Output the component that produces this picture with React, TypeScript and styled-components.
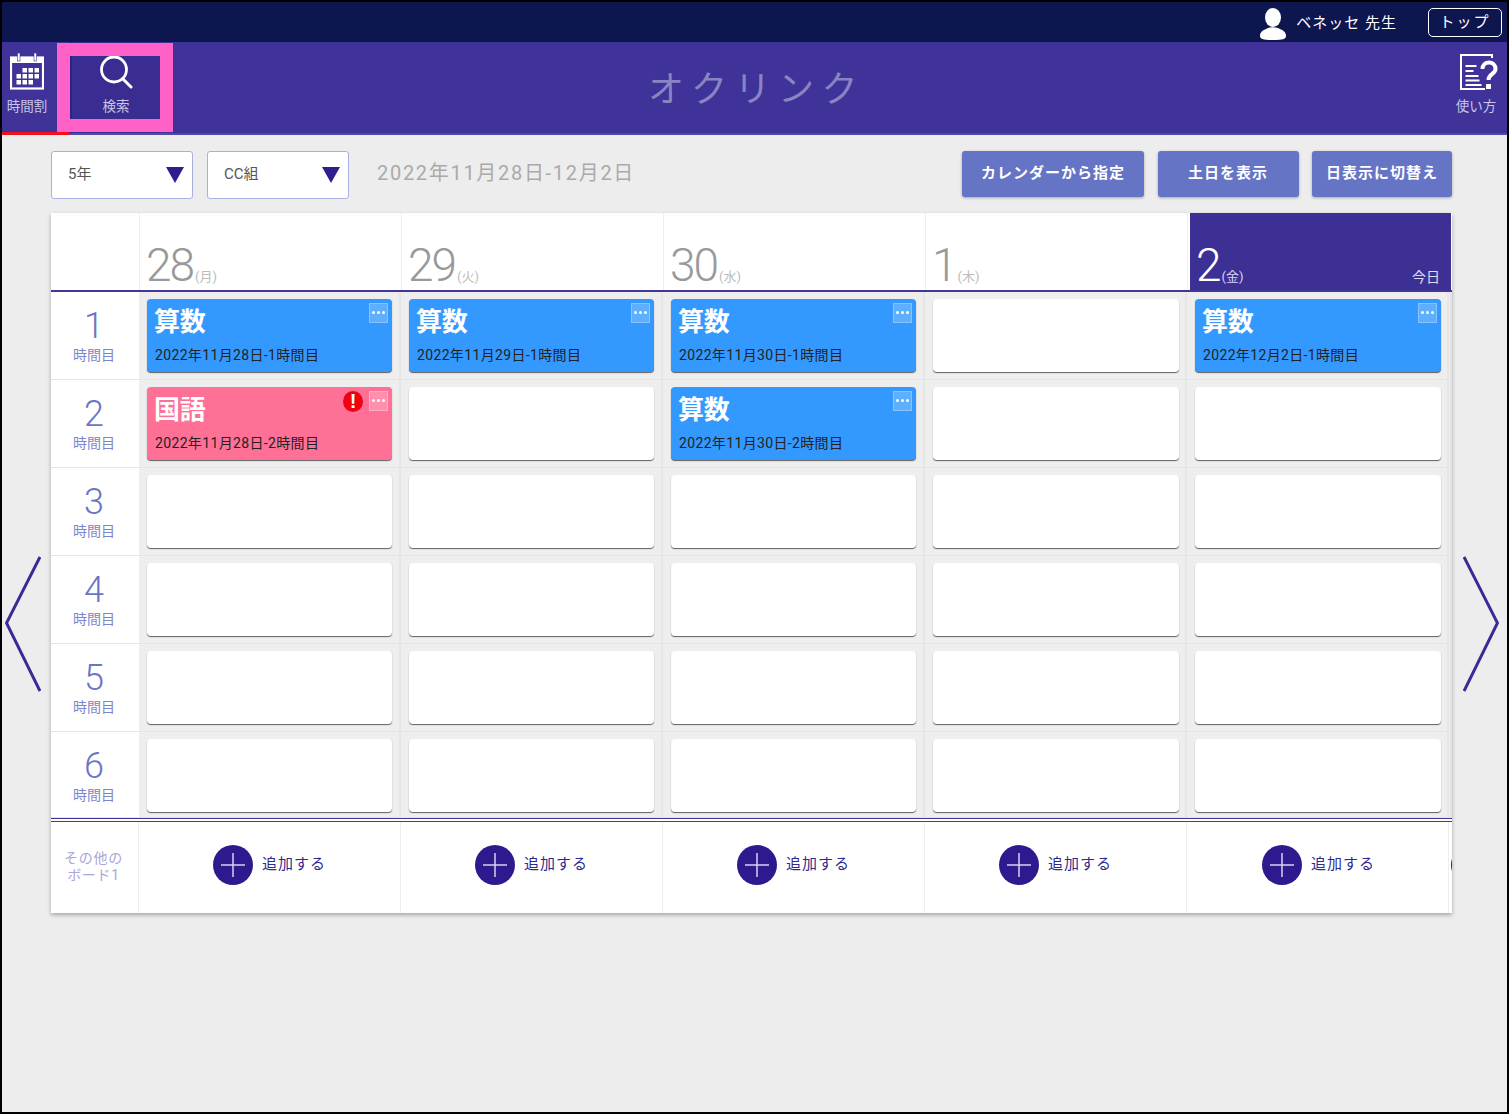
import styled, { createGlobalStyle } from "styled-components"

const GlobalStyle = createGlobalStyle`
  html, body {
    margin: 0;
    padding: 0;
    background: #ededed;
  }
  * {
    box-sizing: border-box;
  }
`

const days = [
  { date: "28", week: "月" },
  { date: "29", week: "火" },
  { date: "30", week: "水" },
  { date: "1", week: "木" },
  { date: "2", week: "金", today: true }
]

type Lesson = { title: string; sub: string; pink?: boolean; alert?: boolean }

const lessons: Record<string, Lesson> = {
  "1-0": { title: "算数", sub: "2022年11月28日-1時間目" },
  "1-1": { title: "算数", sub: "2022年11月29日-1時間目" },
  "1-2": { title: "算数", sub: "2022年11月30日-1時間目" },
  "1-4": { title: "算数", sub: "2022年12月2日-1時間目" },
  "2-0": { title: "国語", sub: "2022年11月28日-2時間目", pink: true, alert: true },
  "2-2": { title: "算数", sub: "2022年11月30日-2時間目" }
}

const periods = [1, 2, 3, 4, 5, 6]

const calendarDots = [
  [12.5, 16], [18.5, 16], [24.5, 16],
  [6.5, 22], [12.5, 22], [18.5, 22], [24.5, 22],
  [6.5, 28], [12.5, 28], [18.5, 28]
]

const App: React.FC = () => {
  return (
    <Frame>
      <GlobalStyle />
      <TopBar>
        <UserIcon viewBox='0 0 26 32'>
          <ellipse cx='13' cy='9.5' rx='8' ry='9.5' fill='#fff' />
          <path d='M0 28c0-5 4-6 8-8 3-1 7-1 10 0 4 2 8 3 8 8 0 3-3 4-13 4S0 31 0 28z' fill='#fff' />
        </UserIcon>
        <UserName>ベネッセ 先生</UserName>
        <TopButton>トップ</TopButton>
      </TopBar>

      <Nav>
        <NavGroup>
          <CalendarTab>
            <svg width='34' height='38' viewBox='0 0 34 38'>
              <rect x='1' y='5.500' width='32' height='31' fill='none' stroke='#fff' strokeWidth='2.200' />
              <rect x='1' y='6' width='32' height='5' fill='#fff' />
              <rect x='7.500' y='1' width='2.500' height='8' fill='#fff' stroke='#3f3399' strokeWidth='0.600' />
              <rect x='24' y='1' width='2.500' height='8' fill='#fff' stroke='#3f3399' strokeWidth='0.600' />
              {calendarDots.map(([x, y]) => (
                <rect key={`${x}-${y}`} x={x} y={y} width='4.500' height='4.500' fill='#fff' />
              ))}
            </svg>
            <TabLabel>時間割</TabLabel>
          </CalendarTab>
          <SearchTab>
            <svg width='34' height='34' viewBox='0 0 34 34'>
              <circle cx='15' cy='14.500' r='12.500' fill='none' stroke='#fff' strokeWidth='2.800' />
              <path d='M24 24l8 8' stroke='#fff' strokeWidth='3' strokeLinecap='round' />
            </svg>
            <TabLabel>検索</TabLabel>
            <Highlight />
          </SearchTab>
        </NavGroup>
        <Title>オクリンク</Title>
        <NavGroup $end>
          <HelpTab>
            <svg width='38' height='36' viewBox='0 0 38 36'>
              <path d='M32 4V1H1v34h24' fill='none' stroke='#fff' strokeWidth='2' />
              <path d='M5.500 12h11M5.500 17h8M5.500 22h13M5.500 26.500h14M5.500 31h16' stroke='#fff' strokeWidth='2' />
              <path
                d='M22.500 15c0-4 3-6.500 6.500-6.500s6.500 2.500 6.500 6.500c0 5-7 5-7 11'
                fill='none'
                stroke='#fff'
                strokeWidth='4'
              />
              <rect x='26' y='30' width='5' height='5' fill='#fff' />
            </svg>
            <TabLabel>使い方</TabLabel>
          </HelpTab>
        </NavGroup>
      </Nav>

      <Content>
        <Arrow viewBox='0 0 36 136'>
          <path d='M35 1L1.500 67 35 135' fill='none' stroke='#3a2a95' strokeWidth='3' />
        </Arrow>
        <Main>
          <Toolbar>
            <Select>
              5年
              <Caret />
            </Select>
            <Select>
              CC組
              <Caret />
            </Select>
            <DateRange>2022年11月28日-12月2日</DateRange>
            <Buttons>
              <ToolButton $width={182}>カレンダーから指定</ToolButton>
              <ToolButton $width={141}>土日を表示</ToolButton>
              <ToolButton $width={140}>日表示に切替え</ToolButton>
            </Buttons>
          </Toolbar>

          <Board>
            <HeadRow>
              <HeadCorner />
              {days.map((day) => (
                <HeadCell key={day.date} $today={day.today}>
                  <DayNumber $today={day.today}>{day.date}</DayNumber>
                  <DayWeek $today={day.today}>({day.week})</DayWeek>
                  {day.today && <TodayTag>今日</TodayTag>}
                </HeadCell>
              ))}
            </HeadRow>

            {periods.map((period) => (
              <PeriodRow key={period}>
                <PeriodLabel>
                  <PeriodNumber>{period}</PeriodNumber>
                  <PeriodText>時間目</PeriodText>
                </PeriodLabel>
                {days.map((_, col) => {
                  const lesson = lessons[`${period}-${col}`]
                  return (
                    <SlotCell key={col}>
                      {lesson ? (
                        <Card $pink={lesson.pink}>
                          <CardTitle>{lesson.title}</CardTitle>
                          <CardSub>{lesson.sub}</CardSub>
                          {lesson.alert && <AlertMark>!</AlertMark>}
                          <MoreButton>
                            <i />
                            <i />
                            <i />
                          </MoreButton>
                        </Card>
                      ) : (
                        <Card $empty />
                      )}
                    </SlotCell>
                  )
                })}
              </PeriodRow>
            ))}

            <BoardRow>
              <BoardLabel>
                その他の
                <br />
                ボード1
              </BoardLabel>
              {days.map((day) => (
                <AddCell key={day.date}>
                  <AddCircle>
                    <svg width='26' height='26' viewBox='0 0 26 26'>
                      <path d='M13 1v24M1 13h24' stroke='#d6d2ee' strokeWidth='1.500' />
                    </svg>
                  </AddCircle>
                  <AddText>追加する</AddText>
                </AddCell>
              ))}
              <NextPeek>
                <AddCircle />
              </NextPeek>
            </BoardRow>
          </Board>
        </Main>
        <Arrow viewBox='0 0 36 136'>
          <path d='M1 1l33.500 66L1 135' fill='none' stroke='#3a2a95' strokeWidth='3' />
        </Arrow>
      </Content>
    </Frame>
  )
}

export default App

const Frame = styled.div`
  width: 1509px;
  height: 1114px;
  border: 2px solid #000;
  background: #ededed;
  font-family: Roboto, "Noto Sans CJK JP", sans-serif;
  overflow: hidden;
`

const TopBar = styled.div`
  height: 40px;
  background: #0e1650;
  display: flex;
  align-items: center;
  justify-content: flex-end;
  padding-right: 5px;
`

const UserIcon = styled.svg`
  width: 26px;
  height: 32px;
  margin-right: 10px;
  margin-top: 4px;
`

const UserName = styled.span`
  color: #fff;
  font-size: 15px;
  letter-spacing: 1px;
  margin: -2px 31px 0 0;
`

const TopButton = styled.div`
  width: 74px;
  height: 29px;
  border: 1px solid #fff;
  border-radius: 5px;
  color: #fff;
  font-size: 15px;
  letter-spacing: 2px;
  display: flex;
  align-items: center;
  justify-content: center;
  margin-top: 1px;
  padding-bottom: 4px;
`

const Nav = styled.div`
  height: 93px;
  background: #3f3399;
  border-bottom: 2px solid #5248a8;
  display: grid;
  grid-template-columns: 1fr auto 1fr;
`

const NavGroup = styled.div<{ $end?: boolean }>`
  display: flex;
  justify-content: ${({ $end }) => ($end ? "flex-end" : "flex-start")};
`

const CalendarTab = styled.div`
  width: 68px;
  height: 93px;
  padding: 10px 18px 0 0;
  border-bottom: 3px solid #f01020;
  display: flex;
  flex-direction: column;
  align-items: center;
  flex-shrink: 0;
`

const SearchTab = styled.div`
  position: relative;
  width: 90px;
  height: 91px;
  background: #3a2d91;
  border-left: 2px solid #2f2385;
  padding-top: 13px;
  display: flex;
  flex-direction: column;
  align-items: center;
  svg {
    margin-bottom: 1px;
  }
`

const HelpTab = styled.div`
  width: 50px;
  margin-right: 6px;
  padding-top: 12px;
  display: flex;
  flex-direction: column;
  align-items: center;
  svg {
    margin-left: 6px;
  }
`

const TabLabel = styled.span`
  font-size: 13.5px;
  line-height: 18px;
  color: #c9c5e6;
  white-space: nowrap;
  margin-top: 7px;
`

const Highlight = styled.span`
  position: absolute;
  left: -15px;
  top: 1px;
  width: 116px;
  height: 89px;
  border: 13px solid #ff61c9;
`

const Title = styled.div`
  font-size: 36px;
  line-height: 97px;
  letter-spacing: 7.5px;
  color: #8985c2;
  padding-left: 4px;
`

const Content = styled.div`
  display: grid;
  grid-template-columns: 49px 1401px 1fr;
`

const Arrow = styled.svg`
  width: 36px;
  height: 136px;
  margin: 421px 0 0 3px;
  &:last-child {
    margin-left: 11px;
  }
`

const Main = styled.div`
  padding-top: 16px;
`

const Toolbar = styled.div`
  height: 48px;
  display: flex;
  align-items: flex-start;
  gap: 14px;
`

const Select = styled.div`
  width: 142px;
  height: 48px;
  background: #fff;
  border: 1px solid #a7b0e0;
  border-radius: 3px;
  padding: 0 8px 5px 16px;
  color: #555;
  font-size: 15px;
  display: flex;
  align-items: center;
  justify-content: space-between;
`

const Caret = styled.span`
  width: 0;
  height: 0;
  margin-top: 5px;
  border-left: 9px solid transparent;
  border-right: 9px solid transparent;
  border-top: 16px solid #2f1e90;
`

const DateRange = styled.div`
  font-size: 20px;
  line-height: 44px;
  letter-spacing: 1.7px;
  color: #aaa;
  margin-left: 14px;
`

const Buttons = styled.div`
  margin-left: auto;
  display: flex;
  gap: 13.5px;
`

const ToolButton = styled.div<{ $width: number }>`
  width: ${({ $width }) => $width}px;
  height: 46px;
  background: #6574c4;
  border-radius: 3px;
  box-shadow: 0 1px 3px rgba(0, 0, 0, 0.3);
  color: #fff;
  font-size: 15px;
  font-weight: 700;
  letter-spacing: 1px;
  display: flex;
  align-items: center;
  justify-content: center;
  padding-bottom: 6px;
`

const Board = styled.div`
  margin-top: 14px;
  width: 1401px;
  background: #fff;
  box-shadow: 0 2px 4px rgba(0, 0, 0, 0.3);
`

const HeadRow = styled.div`
  height: 79px;
  display: grid;
  grid-template-columns: 89px repeat(5, 262px);
  border-bottom: 2px solid #43379c;
`

const HeadCorner = styled.div`
  border-right: 1px solid #eee;
`

const HeadCell = styled.div<{ $today?: boolean }>`
  position: relative;
  padding-left: 6px;
  margin-left: ${({ $today }) => ($today ? "2px" : "0")};
  margin-right: ${({ $today }) => ($today ? "-1px" : "0")};
  background: ${({ $today }) => ($today ? "#3d3095" : "#fff")};
  border-right: 1px solid ${({ $today }) => ($today ? "#3d3095" : "#eee")};
  display: flex;
  align-items: flex-end;
`

const DayNumber = styled.span<{ $today?: boolean }>`
  font-size: 46px;
  line-height: 50px;
  font-weight: 300;
  letter-spacing: -2px;
  color: ${({ $today }) => ($today ? "#fff" : "#999")};
`

const DayWeek = styled.span<{ $today?: boolean }>`
  font-size: 13px;
  line-height: 20px;
  margin-left: 2px;
  color: ${({ $today }) => ($today ? "#d8d4f0" : "#bbb")};
  margin-bottom: 3px;
`

const TodayTag = styled.span`
  position: absolute;
  right: 10px;
  bottom: 4px;
  font-size: 14px;
  line-height: 18px;
  color: #e0ddf2;
`

const PeriodRow = styled.div`
  height: 88px;
  display: grid;
  grid-template-columns: 88px repeat(5, 262px);
  background: #eee;
  border-bottom: 1px solid #e4e4e4;
  border-right: 2px solid #e2e2e2;
  &:nth-child(7) {
    height: 86px;
  }
`

const PeriodLabel = styled.div`
  background: #fff;
  display: flex;
  flex-direction: column;
  align-items: center;
  padding: 14px 2px 0 0;
`

const PeriodNumber = styled.span`
  font-size: 36px;
  line-height: 40px;
  font-weight: 300;
  color: #6a75c5;
`

const PeriodText = styled.span`
  margin-top: -1px;
  font-size: 14px;
  line-height: 20px;
  color: #7d86cc;
`

const SlotCell = styled.div`
  padding: 7px 7px 0 8px;
  border-right: 2px solid #e6e6e6;
  &:nth-child(n + 5) {
    padding-right: 6px;
  }
`

const Card = styled.div<{ $pink?: boolean; $empty?: boolean }>`
  position: relative;
  height: 73px;
  border-radius: 4px;
  background: ${({ $pink, $empty }) => ($empty ? "#fff" : $pink ? "#ff7096" : "#3399ff")};
  box-shadow: 0 1px 1px rgba(0, 0, 0, 0.6);
  padding: 6px 7px 0;
`

const CardTitle = styled.div`
  font-size: 26px;
  line-height: 34px;
  font-weight: 700;
  letter-spacing: -0.2px;
  color: #fff;
`

const CardSub = styled.div`
  margin: 6px 0 0 1px;
  font-size: 14px;
  line-height: 20px;
  color: #222;
  white-space: nowrap;
  letter-spacing: 0.35px;
`

const MoreButton = styled.div`
  position: absolute;
  top: 4px;
  right: 4px;
  width: 19px;
  height: 20px;
  background: rgba(255, 255, 255, 0.22);
  border: 1px solid rgba(255, 255, 255, 0.25);
  display: flex;
  align-items: center;
  justify-content: center;
  gap: 2px;
  padding-bottom: 2px;
  i {
    width: 3px;
    height: 3px;
    border-radius: 50%;
    background: #fff;
  }
`

const AlertMark = styled.span`
  position: absolute;
  top: 4px;
  right: 29px;
  width: 20px;
  height: 21px;
  border-radius: 50%;
  background: #f00010;
  color: #fff;
  font-family: "Liberation Sans", sans-serif;
  font-size: 20px;
  font-weight: 700;
  line-height: 21px;
  text-align: center;
`

const BoardRow = styled.div`
  position: relative;
  height: 95px;
  display: grid;
  grid-template-columns: 88px repeat(5, 262px);
  border-top: 4px double #43379c;
`

const BoardLabel = styled.div`
  border-right: 1px solid #eee;
  padding: 28px 2px 0 0;
  text-align: center;
  font-size: 14px;
  line-height: 17px;
  letter-spacing: 0.7px;
  color: #a9a6d8;
`

const AddCell = styled.div`
  border-right: 1px solid #eee;
  padding: 23px 0 0 74px;
  display: flex;
  align-items: flex-start;
  gap: 9px;
  &:nth-child(6) {
    padding-left: 75px;
  }
`

const AddCircle = styled.span`
  width: 40px;
  height: 40px;
  border-radius: 50%;
  background: #2e1a8e;
  display: flex;
  align-items: center;
  justify-content: center;
  flex-shrink: 0;
`

const AddText = styled.span`
  font-size: 15px;
  line-height: 38px;
  letter-spacing: 1px;
  color: #2e2a8e;
`

const NextPeek = styled.span`
  position: absolute;
  left: 1400px;
  top: 23px;
  width: 1px;
  height: 40px;
  overflow: hidden;
`
